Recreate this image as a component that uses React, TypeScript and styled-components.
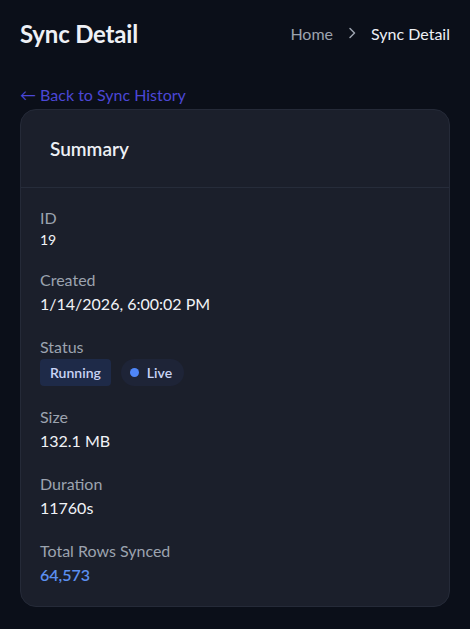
import React from "react";
import styled, { createGlobalStyle } from "styled-components";

const Global = createGlobalStyle`
  html, body { margin: 0; padding: 0; background: #0b0f19; }
  body { font-family: Lato, "Open Sans", sans-serif; color: #e5e7eb; }
  * { box-sizing: border-box; }
`;

const Page = styled.div`
  min-height: 629px;
  padding: 16px 20px 20px 20px;
  background: #0b0f19;
`;

const TopBar = styled.div`
  display: flex;
  align-items: center;
  justify-content: space-between;
  height: 34px;
`;

const Title = styled.h1`
  margin: 0;
  font-size: 24px;
  font-weight: 700;
  color: #eef0f5;
  letter-spacing: -0.2px;
`;

const Crumbs = styled.nav`
  display: flex;
  align-items: center;
  gap: 14px;
  font-size: 16px;
`;

const Crumb = styled.span<{ $active?: boolean }>`
  color: ${(p) => (p.$active ? "#eef0f5" : "#9ca3af")};
`;

const Sep = styled.span`
  color: #9ca3af;
  display: inline-flex;
`;

const BackLink = styled.a`
  display: inline-block;
  margin-top: 35px;
  font-size: 16px;
  line-height: 20px;
  color: #4b47d6;
  text-decoration: none;
`;

const Card = styled.section`
  margin-top: 4px;
  background: #1b1f2b;
  border: 1px solid #252a38;
  border-radius: 16px;
  overflow: hidden;
`;

const CardHeader = styled.div`
  height: 78px;
  display: flex;
  align-items: center;
  padding: 0 29px;
  border-bottom: 1px solid #262c3a;
`;

const CardTitle = styled.h2`
  margin: 0;
  font-size: 19px;
  font-weight: 600;
  color: #eef0f5;
`;

const CardBody = styled.div`
  padding: 18px 19px 19px 19px;
  display: flex;
  flex-direction: column;
  gap: 19px;
`;

const Field = styled.div`
  display: flex;
  flex-direction: column;
`;

const Label = styled.div`
  font-size: 16px;
  line-height: 24px;
  color: #9ca3af;
`;

const Value = styled.div<{ $small?: boolean; $accent?: boolean }>`
  font-size: ${(p) => (p.$small ? "14px" : "16px")};
  line-height: ${(p) => (p.$small ? "19px" : "24px")};
  color: ${(p) => (p.$accent ? "#5b8ff0" : "#f1f3f7")};
  font-weight: ${(p) => (p.$accent ? 600 : 400)};
`;

const Badges = styled.div`
  display: flex;
  gap: 10px;
`;

const Badge = styled.span<{ $pill?: boolean }>`
  display: inline-flex;
  align-items: center;
  gap: 8px;
  height: 27px;
  padding: 0 ${(p) => (p.$pill ? "12px" : "10px")} 0 ${(p) => (p.$pill ? "9px" : "10px")};
  border-radius: ${(p) => (p.$pill ? "14px" : "4px")};
  background: ${(p) => (p.$pill ? "#1e2437" : "#1e2a48")};
  color: #c9d4f5;
  font-size: 14px;
  font-weight: 600;
`;

const Dot = styled.span`
  width: 9px;
  height: 9px;
  border-radius: 50%;
  background: #4f86f7;
`;

export default function App() {
  return (
    <>
      <Global />
      <Page>
        <TopBar>
          <Title>Sync Detail</Title>
          <Crumbs>
            <Crumb>Home</Crumb>
            <Sep>
              <svg width="10" height="14" viewBox="0 0 10 14" fill="none">
                <path d="M3 2.5 L7.5 7 L3 11.5" stroke="#9ca3af" strokeWidth="1.5" strokeLinecap="round" strokeLinejoin="round" />
              </svg>
            </Sep>
            <Crumb $active>Sync Detail</Crumb>
          </Crumbs>
        </TopBar>
        <BackLink href="#">← Back to Sync History</BackLink>
        <Card>
          <CardHeader>
            <CardTitle>Summary</CardTitle>
          </CardHeader>
          <CardBody>
            <Field>
              <Label>ID</Label>
              <Value $small>19</Value>
            </Field>
            <Field>
              <Label>Created</Label>
              <Value>1/14/2026, 6:00:02 PM</Value>
            </Field>
            <Field>
              <Label>Status</Label>
              <Badges>
                <Badge>Running</Badge>
                <Badge $pill>
                  <Dot />
                  Live
                </Badge>
              </Badges>
            </Field>
            <Field>
              <Label>Size</Label>
              <Value>132.1 MB</Value>
            </Field>
            <Field>
              <Label>Duration</Label>
              <Value>11760s</Value>
            </Field>
            <Field>
              <Label>Total Rows Synced</Label>
              <Value $accent>64,573</Value>
            </Field>
          </CardBody>
        </Card>
      </Page>
    </>
  );
}
